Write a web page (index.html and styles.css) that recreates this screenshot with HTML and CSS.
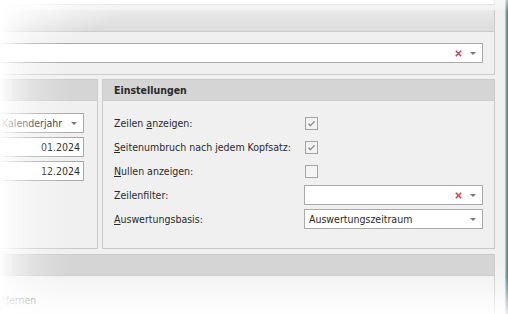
FILE: index.html
```html
<!DOCTYPE html>
<html lang="de">
<head>
<meta charset="utf-8">
<title>Einstellungen</title>
<link rel="stylesheet" href="styles.css">
</head>
<body>
<div class="window">
  <div class="content">
    <div class="above"></div>
    <div class="bar bar1"></div>
    <div class="section1">
      <div class="combo combo-top">
        <span class="value"></span>
        <span class="clear"><svg width="7" height="7" viewBox="0 0 7 7"><path d="M0.8 0.8L6.2 6.2M6.2 0.8L0.8 6.2" stroke="#d2474f" stroke-width="1.6"/></svg></span>
        <span class="arrow"></span>
      </div>
    </div>
    <div class="row2">
      <div class="panel panel-left">
        <div class="phead"></div>
        <div class="pbody left-body">
          <div class="combo combo-left">
            <span class="value">Kalenderjahr</span>
            <span class="arrow"></span>
          </div>
          <div class="field">01.2024</div>
          <div class="field">12.2024</div>
        </div>
      </div>
      <div class="panel panel-right">
        <div class="phead">Einstellungen</div>
        <div class="pbody settings">
          <div class="label">Zeilen <u>a</u>nzeigen:</div>
          <div class="ctl"><span class="check on"><svg width="11" height="11" viewBox="0 0 11 11"><path d="M2.5 5.8L4.4 7.6L8.6 3.4" fill="none" stroke="#808080" stroke-width="1.2"/></svg></span></div>
          <div class="label"><u>S</u>eitenumbruch nach jedem Kopfsatz:</div>
          <div class="ctl"><span class="check on"><svg width="11" height="11" viewBox="0 0 11 11"><path d="M2.5 5.8L4.4 7.6L8.6 3.4" fill="none" stroke="#808080" stroke-width="1.2"/></svg></span></div>
          <div class="label"><u>N</u>ullen anzeigen:</div>
          <div class="ctl"><span class="check"></span></div>
          <div class="label">Zeilenfilter:</div>
          <div class="ctl">
            <div class="combo">
              <span class="value"></span>
              <span class="clear"><svg width="7" height="7" viewBox="0 0 7 7"><path d="M0.8 0.8L6.2 6.2M6.2 0.8L0.8 6.2" stroke="#d2474f" stroke-width="1.6"/></svg></span>
              <span class="arrow"></span>
            </div>
          </div>
          <div class="label"><u>A</u>uswertungsbasis:</div>
          <div class="ctl">
            <div class="combo">
              <span class="value">Auswertungszeitraum</span>
              <span class="arrow"></span>
            </div>
          </div>
        </div>
      </div>
    </div>
    <div class="section3">
      <div class="phead"></div>
      <div class="bottom-body"><span class="entf">Ent<u>f</u>ernen</span></div>
    </div>
  </div>
  <div class="edge"></div>
  <div class="fade"></div>
</div>
</body>
</html>
```
FILE: styles.css
```css
html, body {
  margin: 0;
  padding: 0;
  background: #ffffff;
}
body {
  font-family: "DejaVu Sans Condensed", "Liberation Sans", sans-serif;
  font-size: 10.5px;
  color: #2a2a2a;
}
.window {
  position: relative;
  width: 508px;
  height: 314px;
  overflow: hidden;
  display: flex;
}
.content {
  width: 505px;
  background: linear-gradient(to bottom, #f0f0f0 0, #f0f0f0 260px, #f7f7f7 314px);
  display: flex;
  flex-direction: column;
}
.content > div {
  width: 495px;
  box-sizing: border-box;
}
.above {
  height: 5px;
  background: #ffffff;
  border-bottom: 1px solid #d9d9d9;
  border-right: 1px solid #e2e2e2;
}
.bar1 {
  margin-top: 5px;
  height: 22px;
  background: linear-gradient(to bottom, #e9e9e9, #dcdcdc);
  border-bottom: 1px solid #cbcbcb;
  border-right: 1px solid #cbcbcb;
}
.section1 {
  height: 43px;
  padding: 11px 11px 0 0;
  border-right: 1px solid #cbcbcb;
  border-bottom: 1px solid #cbcbcb;
}
.combo {
  height: 20px;
  box-sizing: border-box;
  background: #ffffff;
  border: 1px solid #a9a9a9;
  display: flex;
  align-items: center;
  padding: 0 5px 0 4px;
}
.combo-top {
  border-left: none;
}
.combo .value {
  flex: 1;
  white-space: nowrap;
  overflow: hidden;
}
.clear {
  width: 7px;
  height: 7px;
  display: flex;
  margin-right: 8px;
}
.arrow {
  width: 0;
  height: 0;
  border-left: 3px solid transparent;
  border-right: 3px solid transparent;
  border-top: 3px solid #7a7a7a;
  margin-right: 1px;
}
.row2 {
  margin-top: 4px;
  display: flex;
  gap: 4px;
  height: 170px;
}
.panel {
  box-sizing: border-box;
  border: 1px solid #c9c9c9;
  display: flex;
  flex-direction: column;
}
.panel-left {
  width: 98px;
  border-left: none;
}
.panel-right {
  width: 393px;
}
.phead {
  height: 21px;
  flex: none;
  box-sizing: border-box;
  background: #d5d5d5;
  border-bottom: 1px solid #cdcdcd;
  font-weight: bold;
  line-height: 20px;
  padding-left: 11px;
  color: #2a2a2a;
}
.pbody {
  flex: 1;
}
.left-body {
  padding: 12px 13px 0 0;
  display: flex;
  flex-direction: column;
  gap: 4px;
}
.combo-left {
  border-left: none;
  padding-left: 2px;
}
.field {
  height: 20px;
  box-sizing: border-box;
  background: #ffffff;
  border: 1px solid #a9a9a9;
  border-left: none;
  text-align: right;
  line-height: 18px;
  padding-right: 3px;
}
.settings {
  padding: 10px 11px 0 11px;
  display: grid;
  grid-template-columns: 190px 179px;
  grid-auto-rows: 24px;
  align-items: center;
}
.label {
  white-space: nowrap;
}
.ctl {
  display: flex;
  align-items: center;
}
.ctl .combo {
  width: 179px;
}
.check {
  width: 13px;
  height: 13px;
  box-sizing: border-box;
  border: 1px solid #a4a4a4;
  background: #f4f4f4;
  margin-left: 1px;
  display: flex;
  align-items: center;
  justify-content: center;
}
.check.on {
  background: #f2f2f2;
}
.section3 {
  margin-top: 5px;
  flex: 1;
  border-top: 1px solid #cbcbcb;
  border-right: 1px solid #cbcbcb;
}
.section3 .phead {
  height: 21px;
}
.bottom-body {
  padding-top: 18px;
  margin-left: -10px;
  color: #444;
}
.edge {
  width: 3px;
  background: linear-gradient(to right, #c7d8d6, #6aaaa6 45%, #2f8682);
}
.fade {
  position: absolute;
  left: 0;
  top: 0;
  width: 508px;
  height: 314px;
  pointer-events: none;
  background:
    radial-gradient(ellipse 130px 45px at 0 0, rgba(255,255,255,0.9), rgba(255,255,255,0)),
    linear-gradient(to right, rgba(255,255,255,0.97) 0, rgba(255,255,255,0.6) 14px, rgba(255,255,255,0.25) 35px, rgba(255,255,255,0) 70px),
    linear-gradient(to bottom, rgba(255,255,255,0) 276px, rgba(255,255,255,0.85) 314px),
    linear-gradient(to bottom, rgba(255,255,255,0.5) 0, rgba(255,255,255,0) 12px);
}
```
